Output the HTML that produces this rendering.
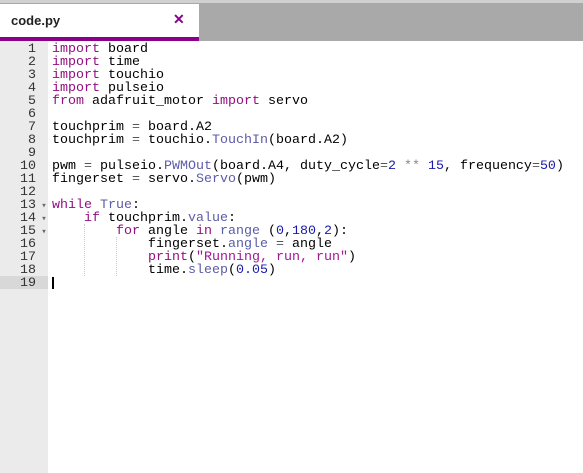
<!DOCTYPE html>
<html><head><style>
body{margin:0;width:583px;height:473px;overflow:hidden;background:#fff;font-family:"Liberation Sans",sans-serif;position:relative}
#top{position:absolute;left:0;top:0;width:583px;height:41px;background:#a9a9a9}
#strip{position:absolute;left:0;top:0;width:583px;height:3px;background:#d0d0d0}
#tab{position:absolute;left:0;top:4px;width:199px;height:33px;background:#fff}
#tab .n{position:absolute;left:11px;top:9px;font-size:13px;font-weight:bold;color:#222}
#tab .x{position:absolute;left:173px;top:7px;font-size:14px;font-weight:bold;color:#8b008b}
#bar{position:absolute;left:0;top:37px;width:199px;height:4px;background:#8b008b}
#gut{position:absolute;left:0;top:41px;width:48px;height:432px;background:#ebebeb}
#code{position:absolute;left:0;top:43px;font-family:"Liberation Mono",monospace;font-size:13.33px;line-height:13px;color:#000}
.l{height:13px;position:relative;white-space:pre}
.g{display:inline-block;width:36px;text-align:right;color:#333}
.f{display:inline-block;width:16px;color:#666;font-size:9px;text-align:center}
.k{color:#930f80}.b{color:#5c5ca8}.n{color:#1a1aa6}.o{color:#888}.s{color:#a31596}.p{color:#555}
</style></head><body>
<div id="top"></div><div id="strip"></div>
<div id="tab"><span class="n">code.py</span><span class="x">✕</span></div>
<div id="bar"></div>
<div id="gut"></div>
<div style="position:absolute;left:0;top:276px;width:48px;height:13px;background:#d8d8d8"></div>
<div style="position:absolute;left:52px;top:277px;width:2px;height:12px;background:#000"></div>
<div style="position:absolute;left:84px;top:224px;height:52px;border-left:1px dotted #ccc"></div>
<div style="position:absolute;left:116px;top:237px;height:39px;border-left:1px dotted #ccc"></div>
<div id="code"><div class="l"><span class="g">1</span><span class="f"> </span><span class="k">import</span> board</div><div class="l"><span class="g">2</span><span class="f"> </span><span class="k">import</span> time</div><div class="l"><span class="g">3</span><span class="f"> </span><span class="k">import</span> touchio</div><div class="l"><span class="g">4</span><span class="f"> </span><span class="k">import</span> pulseio</div><div class="l"><span class="g">5</span><span class="f"> </span><span class="k">from</span> adafruit_motor <span class="k">import</span> servo</div><div class="l"><span class="g">6</span><span class="f"> </span></div><div class="l"><span class="g">7</span><span class="f"> </span>touchprim <span class="p">=</span> board.A2</div><div class="l"><span class="g">8</span><span class="f"> </span>touchprim <span class="p">=</span> touchio.<span class="b">TouchIn</span>(board.A2)</div><div class="l"><span class="g">9</span><span class="f"> </span></div><div class="l"><span class="g">10</span><span class="f"> </span>pwm <span class="p">=</span> pulseio.<span class="b">PWMOut</span>(board.A4, duty_cycle<span class="p">=</span><span class="n">2</span> <span class="o">**</span> <span class="n">15</span>, frequency<span class="p">=</span><span class="n">50</span>)</div><div class="l"><span class="g">11</span><span class="f"> </span>fingerset <span class="p">=</span> servo.<span class="b">Servo</span>(pwm)</div><div class="l"><span class="g">12</span><span class="f"> </span></div><div class="l"><span class="g">13</span><span class="f">▾</span><span class="k">while</span> <span class="b">True</span>:</div><div class="l"><span class="g">14</span><span class="f">▾</span>    <span class="k">if</span> touchprim.<span class="b">value</span>:</div><div class="l"><span class="g">15</span><span class="f">▾</span>        <span class="k">for</span> angle <span class="k">in</span> <span class="b">range</span> (<span class="n">0</span>,<span class="n">180</span>,<span class="n">2</span>):</div><div class="l"><span class="g">16</span><span class="f"> </span>            fingerset.<span class="b">angle</span> <span class="p">=</span> angle</div><div class="l"><span class="g">17</span><span class="f"> </span>            <span class="k">print</span>(<span class="s">"Running, run, run"</span>)</div><div class="l"><span class="g">18</span><span class="f"> </span>            time.<span class="b">sleep</span>(<span class="n">0.05</span>)</div><div class="l"><span class="g">19</span><span class="f"> </span></div></div>
</body></html>
